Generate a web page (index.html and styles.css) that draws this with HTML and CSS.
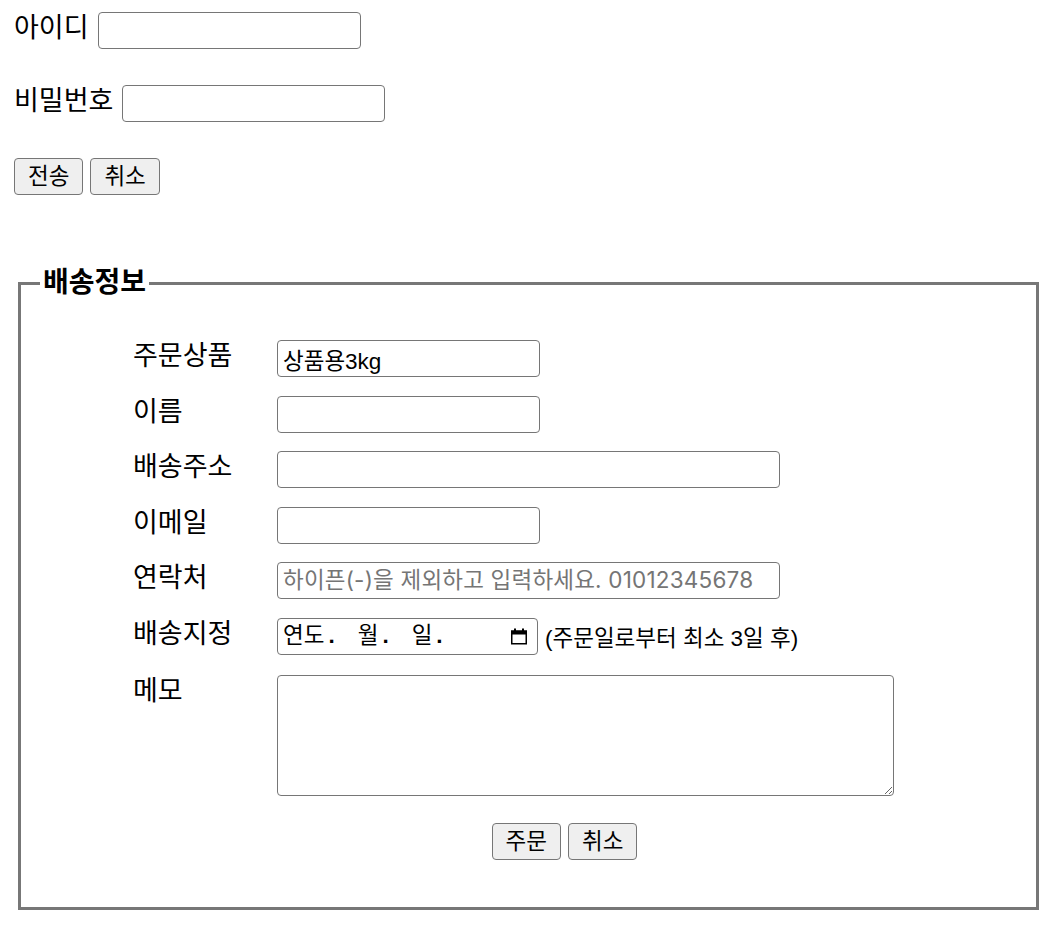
FILE: index.html
```html
<!DOCTYPE html>
<html lang="ko">
<head>
<meta charset="utf-8">
<title>주문</title>
<link rel="stylesheet" href="styles.css">
</head>
<body>
<div class="page">
  <form class="login">
    <div class="row"><label>아이디</label><input class="field" type="text"></div>
    <div class="row"><label>비밀번호</label><input class="field" type="password"></div>
    <div class="btns"><button class="btn" type="button">전송</button><button class="btn" type="button">취소</button></div>
  </form>

  <fieldset class="ship">
    <legend>배송정보</legend>
    <div class="grid">
      <label>주문상품</label><input class="field" type="text" value="상품용3kg">
      <label>이름</label><input class="field" type="text">
      <label>배송주소</label><input class="field wide" type="text">
      <label>이메일</label><input class="field" type="email">
      <label>연락처</label><input class="field wide phone" type="tel" placeholder="하이픈(-)을 제외하고 입력하세요. 01012345678">
      <label>배송지정</label>
      <div class="date-row">
        <div class="date-box">
          <span class="date-text"><span>연도</span><span class="sep">.</span><span>월</span><span class="sep">.</span><span>일</span><span class="sep last">.</span></span>
          <svg class="cal" width="18" height="17" viewBox="0 0 18 17" aria-hidden="true"><rect x="1.75" y="3.25" width="14.5" height="12.5" fill="none" stroke="#000" stroke-width="1.5"/><rect x="1" y="2.5" width="16" height="4" fill="#000"/><rect x="4" y="0.5" width="2" height="3" fill="#000"/><rect x="12" y="0.5" width="2" height="3" fill="#000"/></svg>
        </div>
        <span class="hint">(주문일로부터 최소 3일 후)</span>
      </div>
      <label class="memo-label">메모</label><textarea class="memo"></textarea>
    </div>
    <div class="actions"><button class="btn" type="button">주문</button><button class="btn" type="button">취소</button></div>
  </fieldset>
</div>
</body>
</html>
```

FILE: styles.css
```css
body {
  margin: 0;
  background: #fff;
  color: #000;
  font-family: "Liberation Sans", "Noto Sans CJK KR", sans-serif;
  font-size: 27px;
}

.page {
  padding: 12px 17px 0 14px;
}

.login {
  display: flex;
  flex-direction: column;
  align-items: flex-start;
  gap: 36px;
}

.row {
  display: flex;
  align-items: flex-start;
  gap: 9px;
}

label {
  line-height: 33px;
}

.field {
  box-sizing: border-box;
  width: 263px;
  height: 37px;
  margin: 0;
  padding: 0 5px;
  border: 1px solid #767676;
  border-radius: 4px;
  background: #fff;
  color: #000;
  font-family: "Liberation Sans", "Noto Sans CJK KR", sans-serif;
  font-size: 22.5px;
}

.field::placeholder {
  color: #757575;
}

.phone::placeholder {
  font-family: "Inter", "Noto Sans CJK KR", sans-serif;
  letter-spacing: 0.2px;
}

.field.wide {
  width: 503px;
}

.btns {
  display: flex;
  gap: 7px;
}

.btn {
  box-sizing: border-box;
  height: 37px;
  margin: 0;
  padding: 0 13px;
  border: 1px solid #767676;
  border-radius: 4px;
  background: #efefef;
  color: #000;
  font-family: "Liberation Sans", "Noto Sans CJK KR", sans-serif;
  font-size: 22.5px;
  line-height: 35px;
}

.ship {
  margin: 73px 0 0 4px;
  padding: 0 0 47px 19px;
  border: 3px solid #777;
  min-width: 0;
}

.ship legend {
  padding: 0 3px;
  font-weight: bold;
  font-size: 28px;
  line-height: 30px;
}

.grid {
  display: grid;
  grid-template-columns: 144px auto;
  justify-items: start;
  row-gap: 18.5px;
  margin: 42px 0 0 93px;
}

.date-row {
  display: flex;
  align-items: center;
  gap: 7px;
}

.date-box {
  box-sizing: border-box;
  width: 261px;
  height: 37px;
  display: flex;
  align-items: center;
  justify-content: space-between;
  padding: 0 9px 0 5px;
  border: 1px solid #767676;
  border-radius: 4px;
  font-size: 22.5px;
}

.date-text {
  display: flex;
  align-items: baseline;
  line-height: 1;
}

.sep {
  margin: 0 23px 0 4px;
  font-weight: bold;
}

.sep.last {
  margin-right: 0;
}

.cal {
  display: block;
}

.hint {
  font-size: 22.5px;
}

.memo-label,
.memo {
  margin-top: 2px;
}

.memo {
  box-sizing: border-box;
  width: 617px;
  height: 121px;
  padding: 3px 5px;
  border: 1px solid #767676;
  border-radius: 4px;
  font-family: "Liberation Sans", "Noto Sans CJK KR", sans-serif;
  font-size: 22.5px;
}

.actions {
  display: flex;
  justify-content: center;
  gap: 7px;
  width: 863px;
  margin: 27px 0 0 93px;
}
```
